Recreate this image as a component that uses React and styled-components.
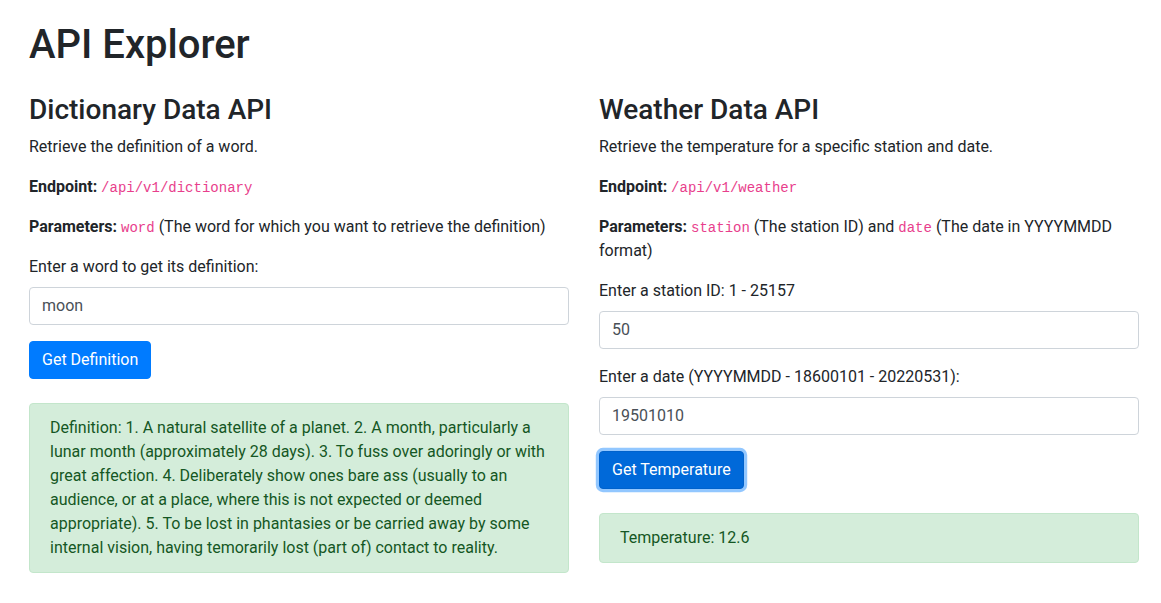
import React from "react";
import styled, { createGlobalStyle } from "styled-components";

const Global = createGlobalStyle`
  *, *::before, *::after { box-sizing: border-box; }
  html, body { margin: 0; padding: 0; }
  body {
    font-family: Roboto, "Helvetica Neue", Arial, "Noto Sans", sans-serif;
    font-size: 16px;
    font-weight: 400;
    line-height: 1.5;
    color: #212529;
    background: #fff;
    text-align: left;
  }
`;

const Container = styled.div`
  padding: 21px 22px 0 29px;
`;

const Title = styled.h1`
  margin: 0 0 8px;
  font-size: 40px;
  font-weight: 500;
  line-height: 1.2;
`;

const Row = styled.div`
  display: grid;
  grid-template-columns: 540px 540px;
  column-gap: 30px;
  padding-top: 16px;
  align-items: start;
`;

const Column = styled.section`
  display: flex;
  flex-direction: column;
`;

const SectionTitle = styled.h3`
  margin: 0 0 8px;
  font-size: 28px;
  font-weight: 500;
  line-height: 1.2;
`;

const Para = styled.p`
  margin: 0 0 16px;
`;

const Code = styled.code`
  font-family: "Liberation Mono", "Courier New", monospace;
  font-size: 87.5%;
  color: #e83e8c;
`;

const Form = styled.form`
  display: flex;
  flex-direction: column;
  align-items: flex-start;
`;

const FormGroup = styled.div`
  display: flex;
  flex-direction: column;
  width: 100%;
  margin-bottom: 16px;
`;

const Label = styled.label`
  display: inline-block;
  margin-bottom: 8px;
`;

const Input = styled.input`
  display: block;
  width: 100%;
  height: 38px;
  padding: 6px 12px;
  font-family: inherit;
  font-size: 16px;
  line-height: 1.5;
  color: #495057;
  background: #fff;
  border: 1px solid #ced4da;
  border-radius: 4px;
  outline: none;
`;

const Button = styled.button`
  display: inline-block;
  font-family: inherit;
  font-size: 16px;
  line-height: 1.5;
  padding: 6px 12px;
  color: #fff;
  background: ${(p) => (p.$focused ? "#0069d9" : "#007bff")};
  border: 1px solid ${(p) => (p.$focused ? "#0062cc" : "#007bff")};
  border-radius: 4px;
  box-shadow: ${(p) => (p.$focused ? "0 0 0 3.2px rgba(38,143,255,0.5)" : "none")};
  cursor: pointer;
`;

const Alert = styled.div`
  margin-top: 24px;
  padding: 12px 20px;
  color: #155724;
  background: #d4edda;
  border: 1px solid #c3e6cb;
  border-radius: 4px;
`;

export default function App() {
  return (
    <>
      <Global />
      <Container>
        <Title>API Explorer</Title>
        <Row>
          <Column>
            <SectionTitle>Dictionary Data API</SectionTitle>
            <Para>Retrieve the definition of a word.</Para>
            <Para>
              <strong>Endpoint:</strong> <Code>/api/v1/dictionary</Code>
            </Para>
            <Para>
              <strong>Parameters:</strong> <Code>word</Code> (The word for which you want to retrieve the definition)
            </Para>
            <Form onSubmit={(e) => e.preventDefault()}>
              <FormGroup>
                <Label>Enter a word to get its definition:</Label>
                <Input defaultValue="moon" />
              </FormGroup>
              <Button type="button">Get Definition</Button>
            </Form>
            <Alert>
              Definition: 1. A natural satellite of a planet. 2. A month, particularly a lunar month (approximately 28 days). 3. To fuss over adoringly or with great affection. 4. Deliberately show ones bare ass (usually to an audience, or at a place, where this is not expected or deemed appropriate). 5. To be lost in phantasies or be carried away by some internal vision, having temorarily lost (part of) contact to reality.
            </Alert>
          </Column>
          <Column>
            <SectionTitle>Weather Data API</SectionTitle>
            <Para>Retrieve the temperature for a specific station and date.</Para>
            <Para>
              <strong>Endpoint:</strong> <Code>/api/v1/weather</Code>
            </Para>
            <Para>
              <strong>Parameters:</strong> <Code>station</Code> (The station ID) and <Code>date</Code> (The date in YYYYMMDD format)
            </Para>
            <Form onSubmit={(e) => e.preventDefault()}>
              <FormGroup>
                <Label>Enter a station ID: 1 - 25157</Label>
                <Input defaultValue="50" />
              </FormGroup>
              <FormGroup>
                <Label>Enter a date (YYYYMMDD - 18600101 - 20220531):</Label>
                <Input defaultValue="19501010" />
              </FormGroup>
              <Button type="button" $focused>Get Temperature</Button>
            </Form>
            <Alert>Temperature: 12.6</Alert>
          </Column>
        </Row>
      </Container>
    </>
  );
}
